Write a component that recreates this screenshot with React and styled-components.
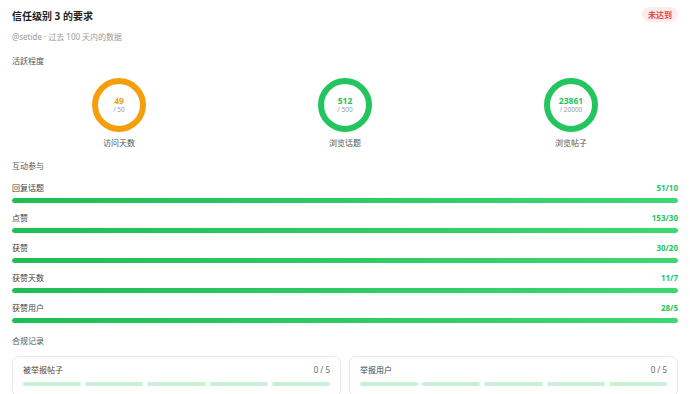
import React from "react";
import styled, { createGlobalStyle } from "styled-components";

const Global = createGlobalStyle`
  html, body { margin: 0; padding: 0; background: #fff; }
  body { font-family: "Noto Sans", "Noto Sans CJK SC", sans-serif; color: #333; }
`;

const Page = styled.div`
  width: 690px;
  box-sizing: border-box;
  padding: 7px 12px 0 12px;
  display: flex;
  flex-direction: column;
`;

const Header = styled.div`
  display: flex;
  justify-content: space-between;
  align-items: flex-start;
  height: 18px;
`;

const Title = styled.h1`
  margin: 0;
  font-size: 10px;
  line-height: 18px;
  font-weight: 700;
  color: #1f1f1f;
`;

const Badge = styled.span`
  height: 15px;
  line-height: 15px;
  padding: 0 6px;
  border-radius: 8px;
  background: #fdecec;
  color: #e5484d;
  font-size: 8px;
  font-weight: 700;
`;

const Sub = styled.div`
  margin-top: 6px;
  font-size: 8px;
  line-height: 12px;
  color: #9a9a9a;
`;

const SectionTitle = styled.div`
  margin-top: ${(p) => p.$mt}px;
  font-size: 8px;
  line-height: 12px;
  color: #555;
`;

const Rings = styled.div`
  margin-top: 11px;
  display: grid;
  grid-template-columns: repeat(3, 1fr);
  column-gap: 12px;
`;

const RingCell = styled.div`
  display: flex;
  flex-direction: column;
  align-items: center;
`;

const RingBox = styled.div`
  position: relative;
  width: 54px;
  height: 54px;
`;

const RingText = styled.div`
  position: absolute;
  inset: 0;
  display: flex;
  flex-direction: column;
  align-items: center;
  justify-content: center;
`;

const RingValue = styled.div`
  font-size: 8.5px;
  line-height: 10px;
  font-weight: 700;
  color: ${(p) => p.$color};
`;

const RingMax = styled.div`
  font-size: 6.5px;
  line-height: 8px;
  color: #9a9a9a;
`;

const RingLabel = styled.div`
  margin-top: 5px;
  font-size: 8px;
  line-height: 12px;
  color: #555;
`;

const Rows = styled.div`
  margin-top: 10px;
  display: flex;
  flex-direction: column;
  gap: 9px;
`;

const Row = styled.div`
  display: flex;
  flex-direction: column;
  gap: 4px;
`;

const RowHead = styled.div`
  display: flex;
  justify-content: space-between;
  font-size: 8px;
  line-height: 12px;
`;

const RowLabel = styled.span`
  color: #444;
`;

const RowValue = styled.span`
  color: #22c55e;
  font-weight: 700;
`;

const Track = styled.div`
  height: 5px;
  border-radius: 3px;
  background: #dcfce7;
  overflow: hidden;
`;

const Fill = styled.div`
  height: 100%;
  border-radius: 3px;
  background: linear-gradient(90deg, #1fbe55, #3cd872);
`;

const Cards = styled.div`
  margin-top: 9px;
  display: grid;
  grid-template-columns: 1fr 1fr;
  column-gap: 8px;
`;

const Card = styled.div`
  border: 1px solid #e8e8e8;
  border-radius: 7px;
  padding: 7px 10px 10px 10px;
`;

const CardHead = styled.div`
  display: flex;
  justify-content: space-between;
  font-size: 8px;
  line-height: 12px;
  color: #444;
`;

const CardCount = styled.span`
  color: #666;
`;

const Segments = styled.div`
  margin-top: 6px;
  display: grid;
  grid-template-columns: repeat(5, 1fr);
  gap: 4px;
`;

const Segment = styled.div`
  height: 3.5px;
  border-radius: 2px;
  background: #c8f1d5;
`;

function Ring({ value, max, label, color }) {
  return (
    <RingCell>
      <RingBox>
        <svg width="54" height="54" viewBox="0 0 54 54">
          <circle cx="27" cy="27" r="24" fill="none" stroke={color} strokeWidth="6" />
        </svg>
        <RingText>
          <RingValue $color={color}>{value}</RingValue>
          <RingMax>/ {max}</RingMax>
        </RingText>
      </RingBox>
      <RingLabel>{label}</RingLabel>
    </RingCell>
  );
}

const rows = [
  ["回复话题", "51/10"],
  ["点赞", "153/30"],
  ["获赞", "30/20"],
  ["获赞天数", "11/7"],
  ["获赞用户", "28/5"],
];

export default function App() {
  return (
    <>
      <Global />
      <Page>
        <Header>
          <Title>信任级别 3 的要求</Title>
          <Badge>未达到</Badge>
        </Header>
        <Sub>@setide · 过去 100 天内的数据</Sub>
        <SectionTitle $mt={12}>活跃程度</SectionTitle>
        <Rings>
          <Ring value="49" max="50" label="访问天数" color="#f59e0b" />
          <Ring value="512" max="500" label="浏览话题" color="#22c55e" />
          <Ring value="23861" max="20000" label="浏览帖子" color="#22c55e" />
        </Rings>
        <SectionTitle $mt={11}>互动参与</SectionTitle>
        <Rows>
          {rows.map(([l, v]) => (
            <Row key={l}>
              <RowHead>
                <RowLabel>{l}</RowLabel>
                <RowValue>{v}</RowValue>
              </RowHead>
              <Track>
                <Fill style={{ width: "100%" }} />
              </Track>
            </Row>
          ))}
        </Rows>
        <SectionTitle $mt={12}>合规记录</SectionTitle>
        <Cards>
          {["被举报帖子", "举报用户"].map((t) => (
            <Card key={t}>
              <CardHead>
                <span>{t}</span>
                <CardCount>0 / 5</CardCount>
              </CardHead>
              <Segments>
                {[0, 1, 2, 3, 4].map((i) => (
                  <Segment key={i} />
                ))}
              </Segments>
            </Card>
          ))}
        </Cards>
      </Page>
    </>
  );
}
